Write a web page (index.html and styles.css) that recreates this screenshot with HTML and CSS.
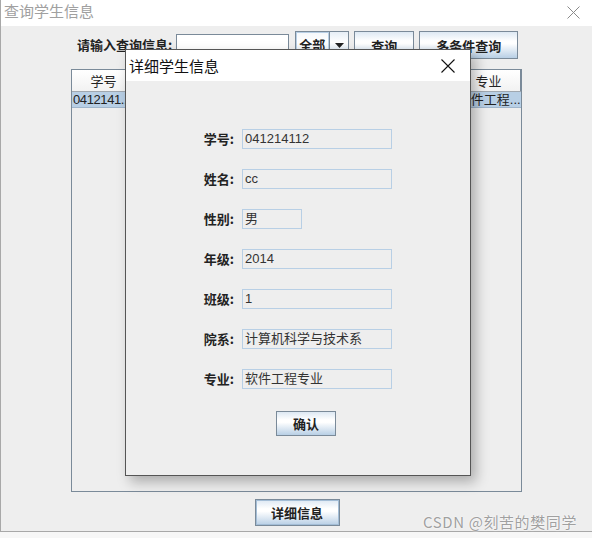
FILE: index.html
```html
<!DOCTYPE html>
<html>
<head>
<meta charset="utf-8">
<link rel="stylesheet" href="styles.css">
</head>
<body>
<div class="window">
  <div class="titlebar">
    <span class="title">查询学生信息</span>
    <svg class="close-main" width="13" height="13" viewBox="0 0 13 13"><path d="M0.5 0.5L12.5 12.5M12.5 0.5L0.5 12.5" stroke="#8a8a8a" stroke-width="1" fill="none"/></svg>
  </div>
  <div class="content">
    <div class="toolbar">
      <span class="tb-label">请输入查询信息:</span>
      <div class="tb-field"></div>
      <div class="combo">
        <span class="combo-text">全部</span>
        <span class="combo-arrow"><svg width="9" height="5" viewBox="0 0 9 5"><path d="M0 0H9L4.5 5Z" fill="#222"/></svg></span>
      </div>
      <button class="btn btn-query">查询</button>
      <button class="btn btn-multi">多条件查询</button>
    </div>
    <div class="scrollpane">
      <div class="thead">
        <div class="th">学号</div><div class="th">姓名</div><div class="th">性别</div><div class="th">年级</div><div class="th">班级</div><div class="th">院系</div><div class="th">专业</div>
      </div>
      <div class="trow">
        <div class="td td-num">0412141...</div><div class="td">cc</div><div class="td">男</div><div class="td">2014</div><div class="td">1</div><div class="td">计算机...</div><div class="td">软件工程...</div>
      </div>
    </div>
    <div class="bottom">
      <button class="btn btn-detail">详细信息</button>
    </div>
  </div>
</div>

<div class="dialog">
  <div class="dlg-title">
    <span class="dlg-title-text">详细学生信息</span>
    <svg class="close-dlg" width="14" height="14" viewBox="0 0 14 14"><path d="M0.5 0.5L13.5 13.5M13.5 0.5L0.5 13.5" stroke="#111" stroke-width="1.1" fill="none"/></svg>
  </div>
  <div class="dlg-body">
    <div class="form">
      <span class="f-label">学号:</span><div class="f-field">041214112</div>
      <span class="f-label">姓名:</span><div class="f-field">cc</div>
      <span class="f-label">性别:</span><div class="f-field f-short">男</div>
      <span class="f-label">年级:</span><div class="f-field">2014</div>
      <span class="f-label">班级:</span><div class="f-field">1</div>
      <span class="f-label">院系:</span><div class="f-field">计算机科学与技术系</div>
      <span class="f-label">专业:</span><div class="f-field">软件工程专业</div>
    </div>
    <button class="btn btn-ok">确认</button>
  </div>
</div>

<div class="watermark">CSDN @刻苦的樊同学</div>
</body>
</html>
```

FILE: styles.css
```css
* { box-sizing: border-box; }
html, body { margin: 0; padding: 0; }
body {
  width: 592px;
  height: 538px;
  background: #f7f7f7;
  font-family: "Liberation Sans", "Noto Sans CJK SC", sans-serif;
  overflow: hidden;
  position: relative;
}
.window {
  width: 592px;
  height: 532px;
  border-left: 1px solid #a8a8a8;
  border-bottom: 1px solid #a8a8a8;
  display: flex;
  flex-direction: column;
}
.titlebar {
  height: 26px;
  background: #ffffff;
  display: flex;
  align-items: center;
  justify-content: space-between;
  padding: 0 12px 4px 3px;
}
.title {
  font-family: "Noto Sans CJK SC", sans-serif;
  font-size: 15px;
  color: #a0a0a0;
  line-height: 18px;
}
.close-main { margin-top: 2px; }
.content {
  flex: 1;
  background: #eeeeee;
  display: flex;
  flex-direction: column;
}
.toolbar {
  margin-top: 5px;
  height: 28px;
  display: flex;
  align-items: center;
  padding-left: 76px;
}
.tb-label {
  font-family: "Noto Sans CJK SC", sans-serif;
  font-weight: bold;
  font-size: 13px;
  color: #222;
  margin-right: 4px;
  margin-bottom: 1px;
}
.tb-field {
  width: 113px;
  height: 22px;
  background: #fff;
  border: 1px solid #7a8a99;
  margin-right: 6px;
}
.combo {
  width: 54px;
  height: 28px;
  border: 1px solid #7a8a99;
  display: flex;
  background: linear-gradient(#f4f7fa, #ffffff 40%, #dbe6f0);
  margin-right: 5px;
}
.combo-text {
  flex: 1;
  border: 1px solid #b8cfe5;
  font-family: "Noto Sans CJK SC", sans-serif;
  font-weight: bold;
  font-size: 13px;
  color: #222;
  line-height: 24px;
  padding-left: 2px;
}
.combo-arrow {
  width: 19px;
  border-left: 1px solid #7a8a99;
  display: flex;
  align-items: center;
  justify-content: center;
  background: linear-gradient(#e6eef6, #ffffff 40%, #c3d6e8);
}
.btn {
  font-family: "Noto Sans CJK SC", sans-serif;
  font-weight: bold;
  font-size: 13px;
  color: #222;
  border: 1px solid #7a8a99;
  background: linear-gradient(#dde8f3 0%, #ffffff 35%, #ffffff 45%, #b8cfe5 100%);
  padding: 0;
  margin: 0;
  line-height: 1;
}
.btn-query { width: 60px; height: 28px; margin-right: 5px; }
.btn-multi { width: 99px; height: 28px; }
.scrollpane {
  margin: 10px 0 0 70px;
  width: 451px;
  height: 423px;
  border: 1px solid #7a8a99;
  background: #eeeeee;
}
.thead {
  display: grid;
  grid-template-columns: repeat(7, 1fr);
  height: 22px;
  background: linear-gradient(#ffffff, #f2f2f2);
  border-bottom: 1px solid #a0a8b0;
}
.th {
  font-family: "Noto Sans CJK SC", sans-serif;
  font-size: 13px;
  color: #222;
  text-align: center;
  line-height: 21px;
  border-right: 1px solid #b0b8c0;
}
.th:last-child { border-right: 1px solid #7a8a99; }
.trow {
  display: grid;
  grid-template-columns: repeat(7, 1fr);
  height: 16px;
  background: #b8cfe5;
  border-bottom: 1px solid #9fb5cb;
}
.td {
  font-family: "Liberation Sans", "Noto Sans CJK SC", sans-serif;
  font-size: 13px;
  color: #222;
  line-height: 15px;
  padding-left: 1px;
  white-space: nowrap;
  overflow: hidden;
}
.td-num { letter-spacing: -0.4px; }
.bottom {
  display: flex;
  justify-content: center;
  padding-left: 1px;
  margin-top: 7px;
}
.btn-detail {
  width: 85px;
  height: 27px;
  box-shadow: inset 0 0 0 1px #a3bdd6;
}
.dialog {
  position: absolute;
  left: 125px;
  top: 49px;
  width: 346px;
  height: 427px;
  border: 1px solid #555555;
  background: #eeeeee;
  box-shadow: 5px 6px 12px rgba(0, 0, 0, 0.28);
  display: flex;
  flex-direction: column;
}
.dlg-title {
  height: 31px;
  background: #ffffff;
  display: flex;
  align-items: center;
  justify-content: space-between;
  padding: 0 15px 0 3px;
}
.dlg-title-text {
  font-family: "Noto Sans CJK SC", sans-serif;
  font-size: 15px;
  color: #111;
  line-height: 18px;
}
.close-dlg { margin-top: 1px; }
.dlg-body {
  padding-top: 48px;
  display: flex;
  flex-direction: column;
}
.form {
  display: grid;
  grid-template-columns: 108px auto;
  column-gap: 8px;
  row-gap: 20px;
  align-items: center;
  justify-items: start;
}
.f-label {
  justify-self: end;
  font-family: "Noto Sans CJK SC", sans-serif;
  font-weight: bold;
  font-size: 13px;
  color: #222;
  line-height: 20px;
}
.f-field {
  width: 150px;
  height: 20px;
  border: 1px solid #b8cfe5;
  background: #eeeeee;
  font-family: "Liberation Sans", "Noto Sans CJK SC", sans-serif;
  font-size: 13px;
  color: #333;
  line-height: 18px;
  padding-left: 2px;
  white-space: nowrap;
}
.f-short { width: 60px; }
.btn-ok {
  width: 60px;
  height: 25px;
  margin: 22px 0 0 150px;
}
.watermark {
  position: absolute;
  left: 423px;
  top: 511px;
  font-family: "Noto Sans CJK SC", sans-serif;
  font-size: 15px;
  color: #a0a0a0;
  text-shadow: 0 0 2px #ffffff, 0 0 1px #ffffff;
  white-space: nowrap;
  letter-spacing: 0.6px;
}
```
